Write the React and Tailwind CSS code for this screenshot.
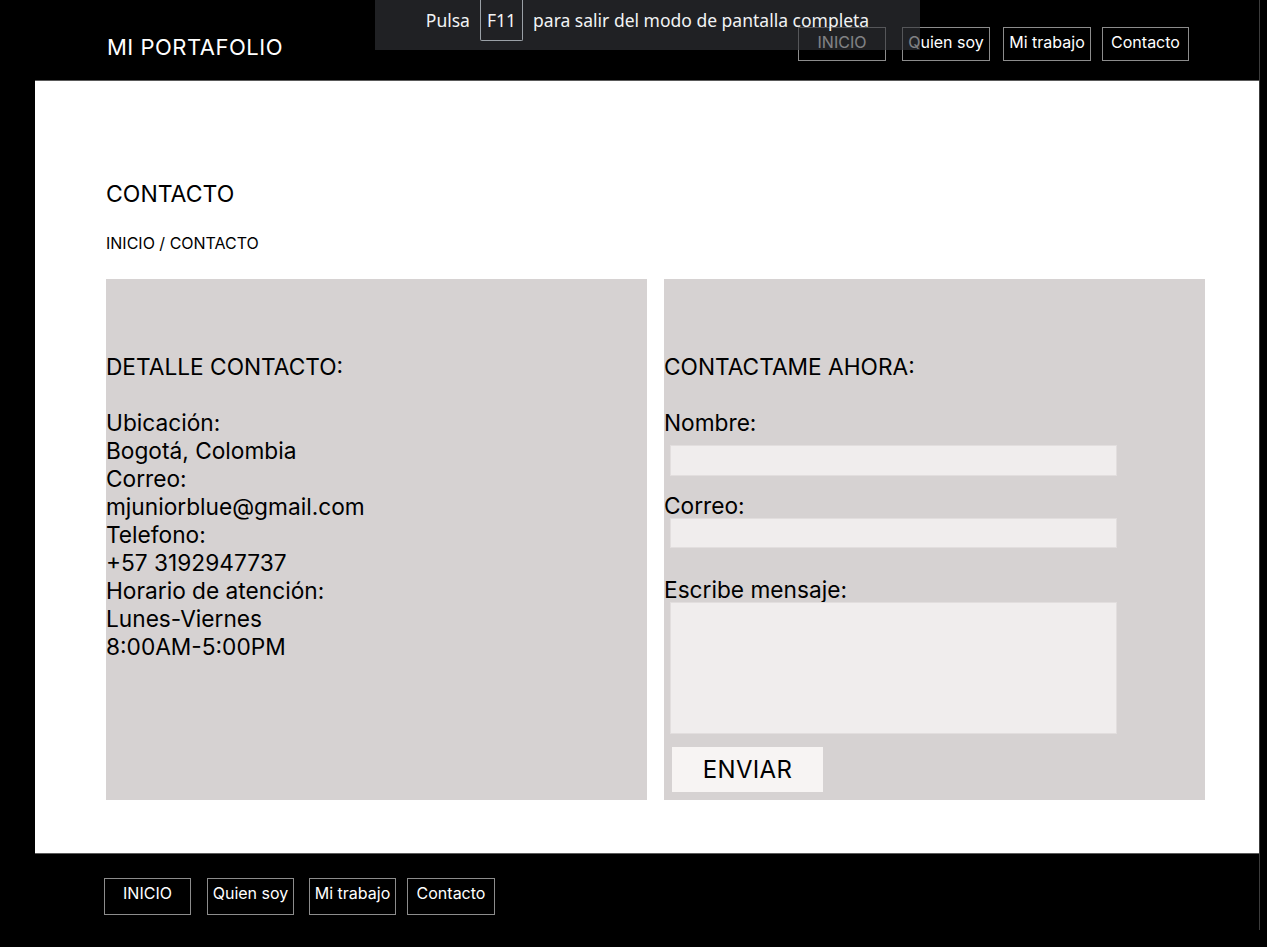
import React from 'react';

function NavButton({ label, className = '' }) {
  return (
    <a
      href="#"
      className={`flex justify-center border border-[#8c8c8c] text-white text-[16px] leading-[20px] ${className}`}
    >
      {label}
    </a>
  );
}

function Header() {
  return (
    <header className="-mt-[8px] flex h-[80px] items-start justify-between pl-[107px] pr-[70px]">
      <h1 className="pt-[35px] text-[22px] leading-[24px] tracking-[0.5px] text-white">MI PORTAFOLIO</h1>
      <nav className="flex pt-[27px]">
        <NavButton label="INICIO" className="h-[34px] w-[88px] pt-[4px]" />
        <NavButton label="Quien soy" className="ml-[16px] h-[34px] w-[88px] pt-[4px]" />
        <NavButton label="Mi trabajo" className="ml-[13px] h-[34px] w-[88px] pt-[4px]" />
        <NavButton label="Contacto" className="ml-[11px] h-[34px] w-[87px] pt-[4px]" />
      </nav>
    </header>
  );
}

function Footer() {
  return (
    <footer className="flex pl-[104px] pt-[24px]">
      <NavButton label="INICIO" className="h-[37px] w-[87px] pt-[4px]" />
      <NavButton label="Quien soy" className="ml-[16px] h-[37px] w-[87px] pt-[4px]" />
      <NavButton label="Mi trabajo" className="ml-[15px] h-[37px] w-[87px] pt-[4px]" />
      <NavButton label="Contacto" className="ml-[11px] h-[37px] w-[88px] pt-[4px]" />
    </footer>
  );
}

function DetailPanel() {
  const lines = [
    'Ubicación:',
    'Bogotá, Colombia',
    'Correo:',
    'mjuniorblue@gmail.com',
    'Telefono:',
    '+57 3192947737',
    'Horario de atención:',
    'Lunes-Viernes',
    '8:00AM-5:00PM',
  ];
  return (
    <section className="bg-[#d6d2d2] pt-[74px] text-[22.7px] leading-[28px] text-black">
      <h3>DETALLE CONTACTO:</h3>
      <div className="mt-[28px]">
        {lines.map((line) => (
          <p key={line}>{line}</p>
        ))}
      </div>
    </section>
  );
}

function FormPanel() {
  return (
    <section className="flex flex-col bg-[#d6d2d2] pt-[76px] text-[22.7px] leading-[24px] text-black">
      <h3>CONTACTAME AHORA:</h3>
      <label className="mt-[32px]">Nombre:</label>
      <input type="text" className="ml-[6px] mt-[10px] h-[31px] w-[447px] border border-[#e2dede] bg-[#f0eded] outline-none" />
      <label className="mt-[18px]">Correo:</label>
      <input type="email" className="ml-[6px] h-[30px] w-[447px] border border-[#e2dede] bg-[#f0eded] outline-none" />
      <label className="mt-[30px]">Escribe mensaje:</label>
      <textarea className="ml-[6px] h-[132px] w-[447px] resize-none border border-[#e2dede] bg-[#f0eded] outline-none" />
      <button
        type="button"
        className="ml-[8px] mt-[13px] h-[45px] w-[151px] bg-[#f7f4f3] text-[24px] leading-[28px] tracking-[0.3px] text-black"
      >
        ENVIAR
      </button>
    </section>
  );
}

export default function App() {
  return (
    <div className="relative h-[947px] w-full overflow-hidden bg-black font-['Inter','Noto_Sans',sans-serif]">
      <div className="mt-[8px] h-[930px] w-[1260px] border-r border-[#3c3c3c]">
        <Header />
        <main className="ml-[35px] h-[774px] w-[1224px] border-y border-[#5a5a5a] bg-white pl-[71px] pt-[99px]">
          <h2 className="text-[23px] leading-[28px] text-black">CONTACTO</h2>
          <p className="mt-[25px] text-[16px] leading-[20px] text-black">INICIO / CONTACTO</p>
          <div className="mt-[26px] grid h-[521px] w-[1099px] grid-cols-2 gap-[17px]">
            <DetailPanel />
            <FormPanel />
          </div>
        </main>
        <Footer />
      </div>

      {/* browser fullscreen toast */}
      <div className="absolute left-[375px] top-0 flex h-[50px] w-[545px] items-start justify-center bg-[rgba(52,54,58,0.62)] font-['Noto_Sans',sans-serif] text-[17.5px] leading-[24px] text-[#f1f3f4]">
        <span className="pt-[8px]">Pulsa</span>
        <span className="mx-[10px] h-[41px] rounded-b-[2px] border border-t-0 border-[#9aa0a6] px-[6px] pt-[8px]">F11</span>
        <span className="pt-[8px]">para salir del modo de pantalla completa</span>
      </div>
    </div>
  );
}
